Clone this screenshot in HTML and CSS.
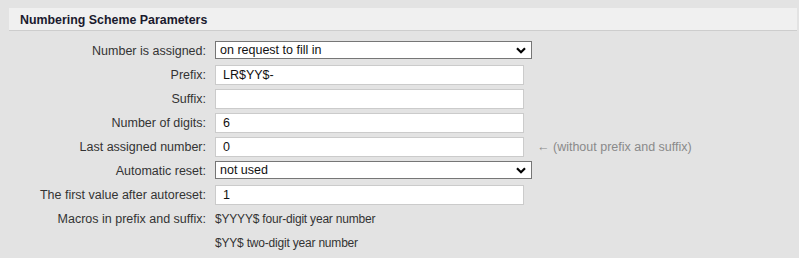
FILE: index.html
```html
<!DOCTYPE html>
<html lang="en">
<head>
    <meta charset="UTF-8">
    <title>Numbering Scheme Parameters</title>
    <link rel="stylesheet" href="styles.css">
</head>
<body>
    <!-- Section header -->
    <div class="section-header">
        <h2>Numbering Scheme Parameters</h2>
    </div>

    <!-- Parameters form -->
    <div class="params">
        <label class="param-label" for="assign">Number is assigned:</label>
        <div class="param-field">
            <div class="select-wrap">
                <select id="assign" class="select-field">
                    <option>on request to fill in</option>
                </select>
                <svg class="chevron" width="10" height="7" viewBox="0 0 10 7"><path d="M1 1.2 L5 5.2 L9 1.2" fill="none" stroke="#000" stroke-width="2.2"/></svg>
            </div>
        </div>

        <label class="param-label" for="prefix">Prefix:</label>
        <div class="param-field"><input class="input-field" id="prefix" type="text" value="LR$YY$-"></div>

        <label class="param-label" for="suffix">Suffix:</label>
        <div class="param-field"><input class="input-field" id="suffix" type="text" value=""></div>

        <label class="param-label" for="digits">Number of digits:</label>
        <div class="param-field"><input class="input-field" id="digits" type="text" value="6"></div>

        <label class="param-label" for="last">Last assigned number:</label>
        <div class="param-field">
            <input class="input-field" id="last" type="text" value="0">
            <span class="hint">&larr; (without prefix and suffix)</span>
        </div>

        <label class="param-label" for="reset">Automatic reset:</label>
        <div class="param-field">
            <div class="select-wrap">
                <select id="reset" class="select-field">
                    <option>not used</option>
                </select>
                <svg class="chevron" width="10" height="7" viewBox="0 0 10 7"><path d="M1 1.2 L5 5.2 L9 1.2" fill="none" stroke="#000" stroke-width="2.2"/></svg>
            </div>
        </div>

        <label class="param-label" for="first">The first value after autoreset:</label>
        <div class="param-field"><input class="input-field" id="first" type="text" value="1"></div>

        <div class="param-label">Macros in prefix and suffix:</div>
        <div class="param-field macro">$YYYY$ four-digit year number</div>

        <div class="param-label"></div>
        <div class="param-field macro">$YY$ two-digit year number</div>
    </div>
</body>
</html>
```

FILE: styles.css
```css
/* Global */
body {
    margin: 0;
    padding: 8px 2px 0 9px;
    background: #e3e3e3;
    font-family: 'Liberation Sans', Arial, sans-serif;
    font-size: 12.5px;
    color: #333;
}

/* Header */
.section-header {
    background: #f0f0f0;
    border-bottom: 1px solid #cdcdcd;
    height: 22px;
    padding-left: 11px;
    display: flex;
    align-items: center;
}

.section-header h2 {
    margin: 0;
    padding-top: 2px;
    font-size: 12.4px;
    font-weight: bold;
    color: #1a1a2e;
}

/* Form grid */
.params {
    display: grid;
    grid-template-columns: 197px 1fr;
    column-gap: 9px;
    row-gap: 4px;
    margin-top: 10px;
}

.param-label {
    text-align: right;
    height: 20px;
    line-height: 20px;
    white-space: nowrap;
}

.param-field {
    display: flex;
    align-items: center;
    height: 20px;
}

.input-field {
    box-sizing: border-box;
    width: 309px;
    height: 20px;
    border: 1px solid #cbcbcb;
    background: #fff;
    padding: 0 7px;
    font-family: inherit;
    font-size: 12.5px;
    color: #111;
    outline: none;
}

.select-wrap {
    position: relative;
    align-self: flex-start;
}

.select-field {
    box-sizing: border-box;
    width: 317px;
    height: 18px;
    border: 1px solid #767676;
    border-radius: 0;
    background: #fff;
    padding: 0 4px;
    font-family: inherit;
    font-size: 12.5px;
    color: #111;
    appearance: none;
    -webkit-appearance: none;
}

.chevron {
    position: absolute;
    right: 6px;
    top: 6px;
    pointer-events: none;
}

.hint {
    margin-left: 13px;
    color: #8a8a8a;
}

.macro {
    color: #333;
    font-size: 12px;
    letter-spacing: -0.2px;
}
```
